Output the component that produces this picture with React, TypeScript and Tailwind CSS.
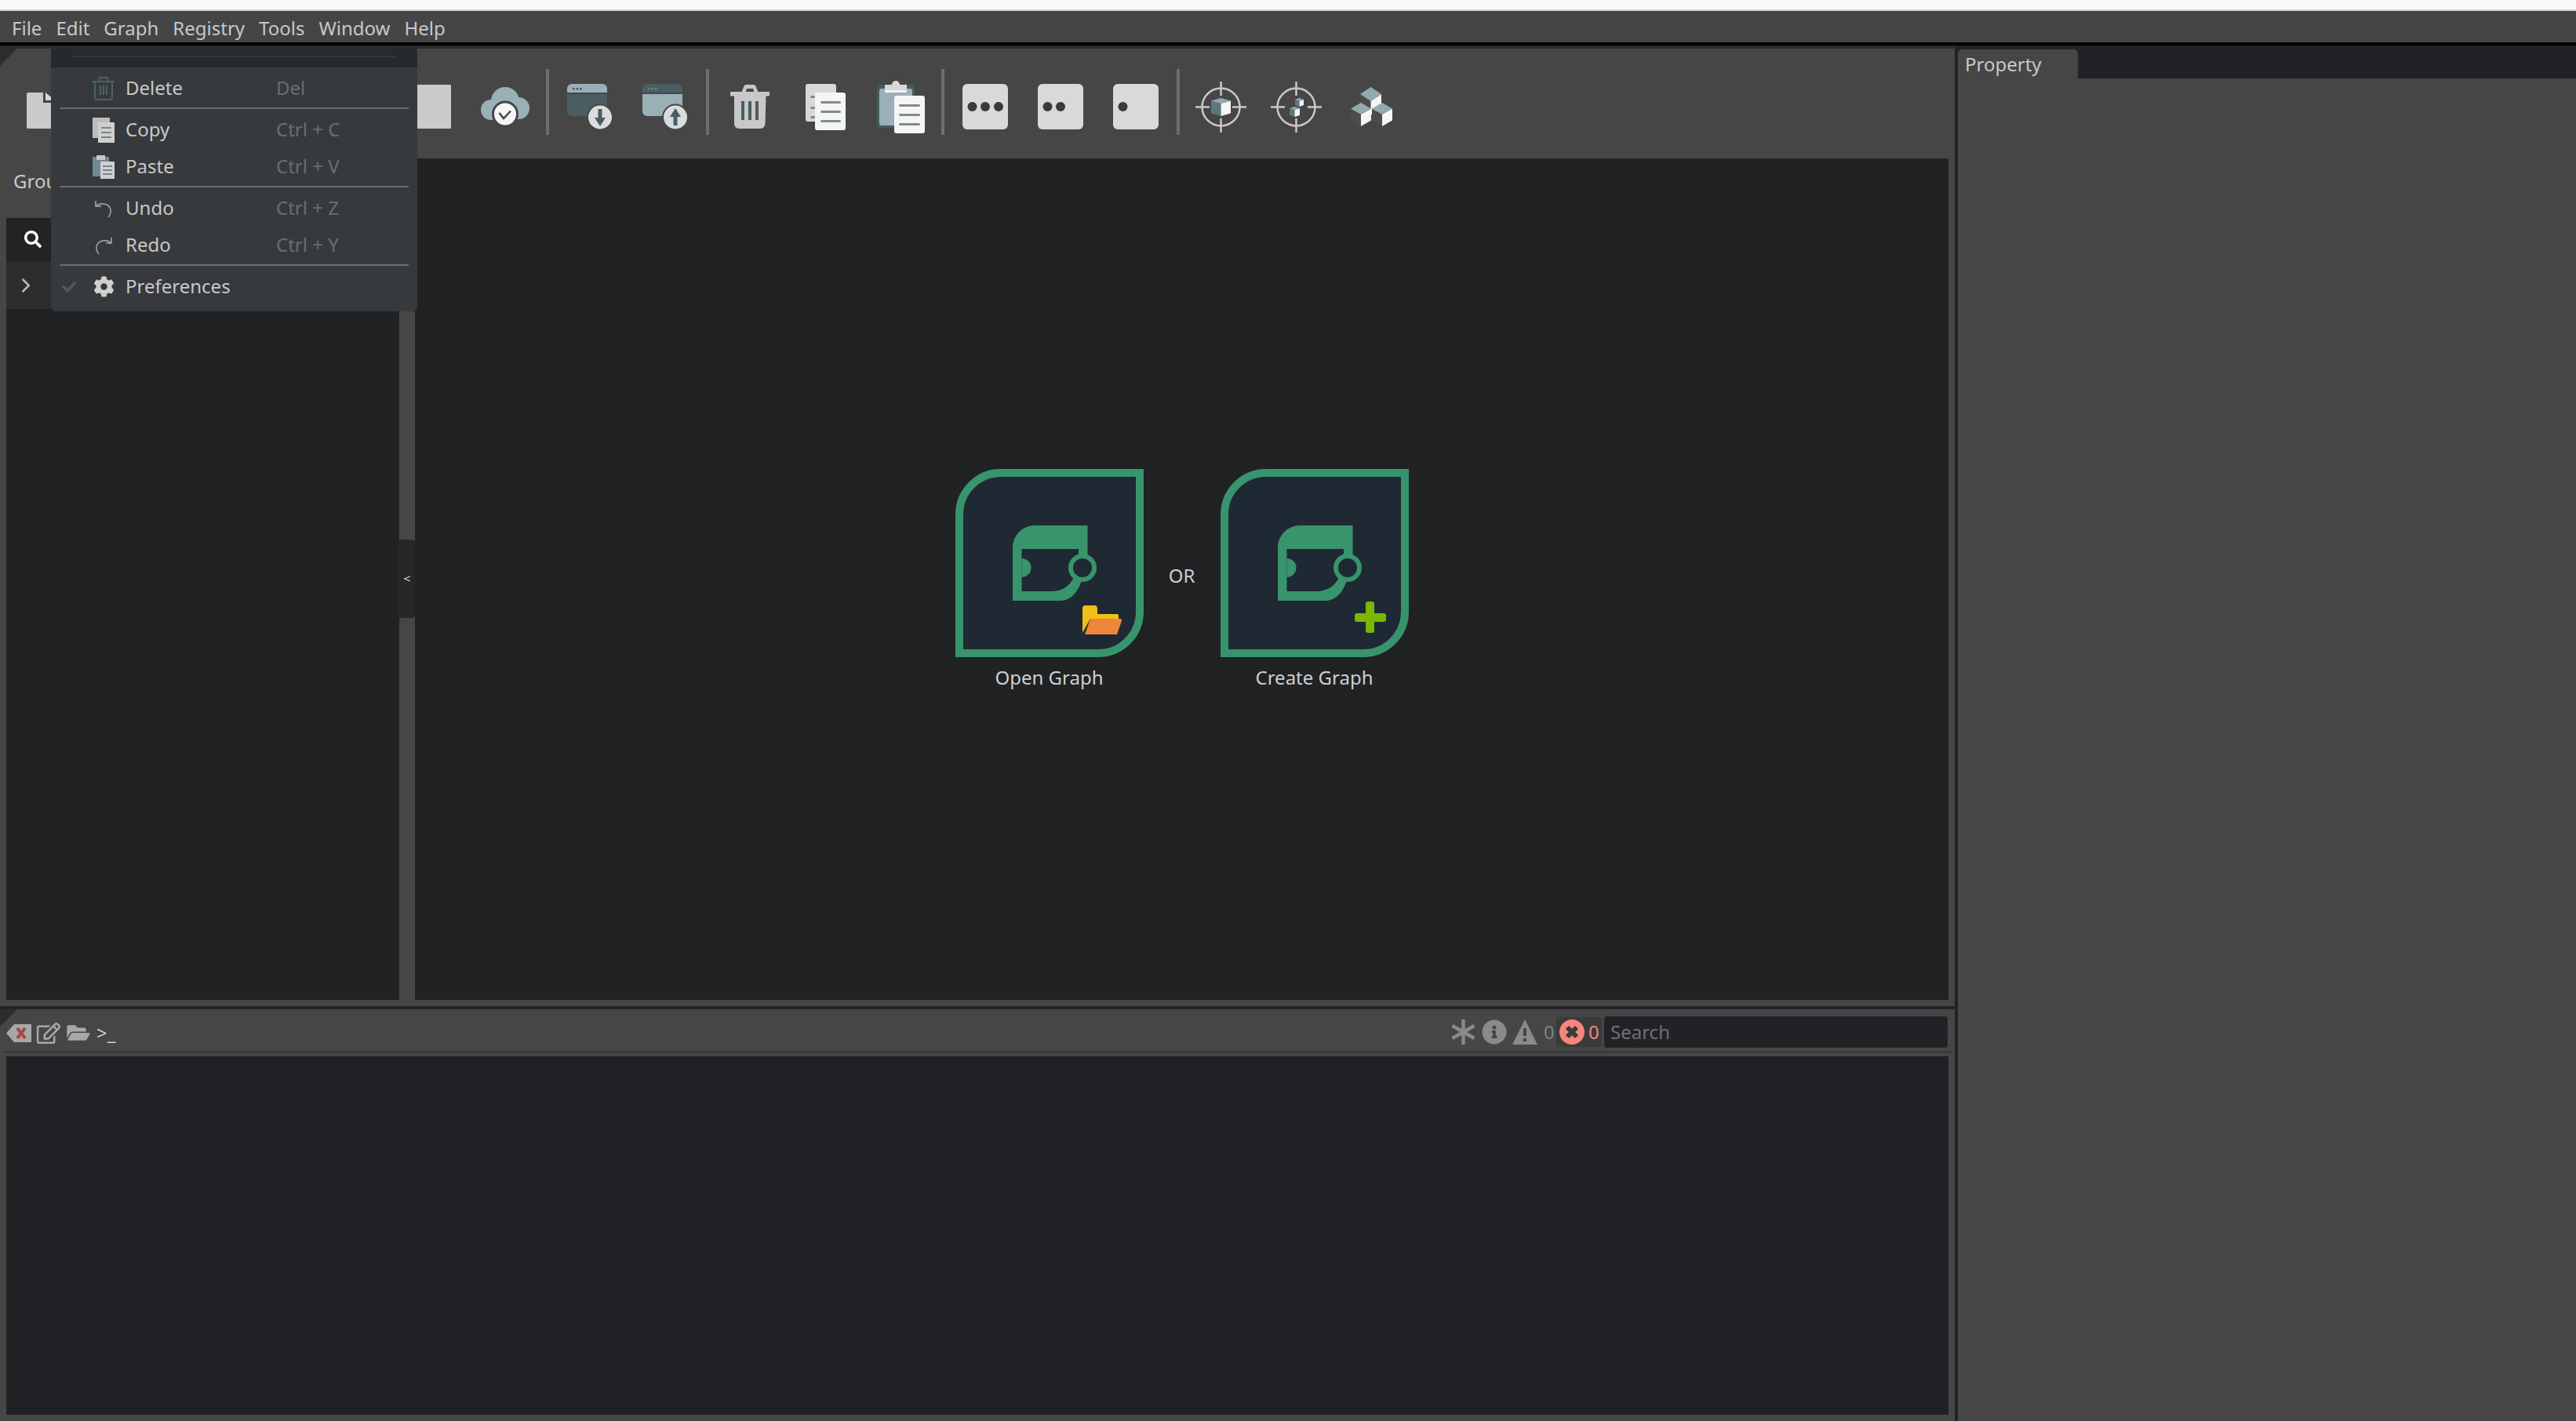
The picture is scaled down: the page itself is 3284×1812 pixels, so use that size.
import { ChevronRight } from "lucide-react";
import { FaCheck, FaCog, FaFolderOpen, FaInfoCircle, FaRegEdit, FaSearch } from "react-icons/fa";

const MENUS = ["File", "Edit", "Graph", "Registry", "Tools", "Window", "Help"];

function Corner() {
  return (
    <svg width="22" height="22" viewBox="0 0 22 22" className="absolute left-0 top-0">
      <path d="M0 0H22L0 22Z" fill="#2d2d2d" />
    </svg>
  );
}

function ToolButton({ children }: { children?: React.ReactNode }) {
  return <div className="flex h-full w-[96px] items-center justify-center pt-[8px]">{children}</div>;
}

function ToolSep() {
  return <div className="mx-[4px] mt-[26px] h-[84px] w-[4px] bg-[#6e6e6e]" />;
}

function FileIcon() {
  return (
    <svg width="52" height="56" viewBox="0 0 52 56">
      <path d="M0 12a2 2 0 0 1 2-2H21V23H52V54a2 2 0 0 1-2 2H2a2 2 0 0 1-2-2Z" fill="#cacaca" />
      <path d="M24 10L36 20H24Z" fill="#d8d8d8" />
    </svg>
  );
}

function SaveIcon() {
  return <svg width="54" height="56" viewBox="0 0 54 56"><path d="M0 0H54V56H0Z" fill="#cacaca" /></svg>;
}

function CloudIcon() {
  return (
    <svg width="62" height="50" viewBox="0 0 62 50">
      <g fill="#9ab0b7">
        <circle cx="31" cy="18" r="18" />
        <circle cx="13" cy="29" r="13" />
        <circle cx="48" cy="27" r="14" />
        <rect x="13" y="20" width="35" height="21" />
      </g>
      <circle cx="31" cy="34.500" r="15.500" fill="#f5f5f5" stroke="#464646" strokeWidth="3" />
      <path d="M23.500 33l5.500 7 9-9.500" fill="none" stroke="#464646" strokeWidth="2.500" />
    </svg>
  );
}

function WindowIcon({ up }: { up?: boolean }) {
  const bar = up ? "#4a5d62" : "#9ab0b7";
  const body = up ? "#9ab0b7" : "#4a5d62";
  return (
    <svg width="58" height="59" viewBox="0 0 58 59">
      <path d="M0 6a6 6 0 0 1 6-6h39a6 6 0 0 1 6 6v5H0Z" fill={bar} />
      <path d="M0 13H51V35a6 6 0 0 1-6 6H6a6 6 0 0 1-6-6Z" fill={body} />
      <g fill={up ? "#6d8289" : "#46565b"}>
        <rect x="7" y="5" width="2.500" height="2.500" />
        <rect x="11.500" y="5" width="2.500" height="2.500" />
        <rect x="16" y="5" width="2.500" height="2.500" />
      </g>
      <circle cx="42" cy="42.500" r="16" fill={up ? "#d8dcdd" : "#dcdcdc"} stroke="#464646" strokeWidth="2" />
      {up ? (
        <path d="M42 31l7 11h-4.500v11h-5V42H35Z" fill="#4a5d62" />
      ) : (
        <path d="M39.500 32h5v11H49l-7 11-7-11h4.500Z" fill="#4a5d62" />
      )}
    </svg>
  );
}

function TrashIcon() {
  return (
    <svg width="50" height="56" viewBox="0 0 50 56">
      <path d="M14 11l3-8a4 4 0 0 1 3-3h10a4 4 0 0 1 3 3l3 8h-5l-2-6H21l-2 6Z" fill="#c8c8c8" />
      <rect x="0" y="9" width="50" height="5.500" rx="1" fill="#c8c8c8" />
      <path d="M5 14H45.500L44.500 50a6 6 0 0 1-6 6H11a6 6 0 0 1-6-6Z" fill="#c8c8c8" />
      <g fill="#4a5d62">
        <rect x="14" y="21" width="4" height="24" />
        <rect x="23" y="21" width="4" height="24" />
        <rect x="32" y="21" width="4" height="24" />
      </g>
    </svg>
  );
}

function CopyIcon() {
  return (
    <svg width="51" height="59" viewBox="0 0 51 59">
      <rect width="39" height="48" rx="3" fill="#d8d8d8" />
      <g fill="#7c8d8f">
        <rect x="6" y="15" width="7" height="3" rx="1.500" />
        <rect x="6" y="29" width="7" height="3" rx="1.500" />
        <rect x="6" y="41" width="7" height="3" rx="1.500" />
      </g>
      <rect x="12" y="11" width="39" height="48" rx="3" fill="#f5f5f5" />
      <g fill="#7c8d8f">
        <rect x="19" y="22" width="26" height="3" rx="1.500" />
        <rect x="19" y="34" width="26" height="3" rx="1.500" />
        <rect x="19" y="46" width="26" height="3" rx="1.500" />
      </g>
    </svg>
  );
}

function PasteIcon() {
  return (
    <svg width="61" height="67" viewBox="0 0 61 67">
      <rect y="5" width="48" height="55" fill="#455a60" />
      <rect x="3" y="10" width="42" height="47" rx="3" fill="#9ab0b7" />
      <path d="M10 5h9a5 5 0 0 1 10 0h9v10H10Z" fill="#d8d8d8" />
      <rect x="10" y="12" width="28" height="3" fill="#f2f2f2" />
      <rect x="22" y="19" width="39" height="48" rx="3" fill="#f5f5f5" />
      <g fill="#7c8d8f">
        <rect x="28" y="30" width="27" height="3" rx="1.500" />
        <rect x="28" y="42" width="27" height="3" rx="1.500" />
        <rect x="28" y="54" width="27" height="3" rx="1.500" />
      </g>
    </svg>
  );
}

function DotsCard({ count }: { count: number }) {
  return (
    <svg width="58" height="58" viewBox="0 0 58 58">
      <rect width="58" height="58" rx="6" fill="#d9d9d9" />
      {[12.5, 29, 46].slice(0, count).map((x) => (
        <circle key={x} cx={x} cy="29" r="6" fill="#3a3a3a" />
      ))}
    </svg>
  );
}

function Cube({ x, y, w, h, d, side = "#5c7780" }: { x: number; y: number; w: number; h: number; d: number; side?: string }) {
  return (
    <g>
      <path d={`M${x} ${y + d / 2}L${x + w / 2} ${y + d}V${y + h}L${x} ${y + h - d / 2}Z`} fill={side} />
      <path d={`M${x + w} ${y + d / 2}L${x + w / 2} ${y + d}V${y + h}L${x + w} ${y + h - d / 2}Z`} fill="#f5f5f5" />
      <path d={`M${x} ${y + d / 2}L${x + w / 2} ${y}L${x + w} ${y + d / 2}L${x + w / 2} ${y + d}Z`} fill="#93a9b0" />
    </g>
  );
}

function TargetIcon({ children }: { children: React.ReactNode }) {
  return (
    <svg width="65" height="65" viewBox="0 0 65 65">
      <circle cx="32.500" cy="32.500" r="24" fill="none" stroke="#c8c8c8" strokeWidth="2.500" />
      <path d="M32.500 0V18M32.500 47V65M0 32.500H18M47 32.500H65" stroke="#c8c8c8" strokeWidth="2.500" />
      {children}
    </svg>
  );
}

function CubesIcon() {
  return (
    <svg width="54" height="50" viewBox="0 0 54 50">
      <Cube x={13} y={0} w={27} h={36} d={18} side="#4c4c4c" />
      <Cube x={1} y={20} w={26} h={30} d={15} side="#4c4c4c" />
      <Cube x={28} y={20} w={26} h={30} d={15} side="#4c4c4c" />
    </svg>
  );
}

function Toolbar() {
  return (
    <div className="relative flex h-[140px] shrink-0 bg-[#464646] pl-[12px]">
      <Corner />
      <ToolButton><FileIcon /></ToolButton>
      <ToolButton />
      <ToolButton />
      <ToolButton />
      <div className="w-[104px]" />
      <ToolButton><SaveIcon /></ToolButton>
      <ToolButton><CloudIcon /></ToolButton>
      <ToolSep />
      <ToolButton><WindowIcon /></ToolButton>
      <ToolButton><WindowIcon up /></ToolButton>
      <ToolSep />
      <ToolButton><TrashIcon /></ToolButton>
      <ToolButton><CopyIcon /></ToolButton>
      <ToolButton><PasteIcon /></ToolButton>
      <ToolSep />
      <ToolButton><DotsCard count={3} /></ToolButton>
      <ToolButton><DotsCard count={2} /></ToolButton>
      <ToolButton><DotsCard count={1} /></ToolButton>
      <ToolSep />
      <ToolButton><TargetIcon><Cube x={20} y={21} w={25} h={23} d={7} /></TargetIcon></ToolButton>
      <ToolButton>
        <TargetIcon>
          <Cube x={31} y={21} w={11} h={11} d={4} />
          <Cube x={24} y={32} w={13} h={13} d={4} />
        </TargetIcon>
      </ToolButton>
      <ToolButton><CubesIcon /></ToolButton>
    </div>
  );
}

function GraphCard({ children }: { children: React.ReactNode }) {
  return (
    <svg width="240" height="240" viewBox="0 0 240 240">
      <path d="M5 235V58A53 53 0 0 1 58 5H235V182A53 53 0 0 1 182 235Z" fill="#1f2933" stroke="#38946c" strokeWidth="10" />
      <path
        fillRule="evenodd"
        d="M73 168V100A28 28 0 0 1 101 72H168.500V112L160 145C155 158 147 168 133 168ZM84.500 102V156H122C136 156 146 150 152 136L157 112V102Z"
        fill="#38946c"
      />
      <path d="M84.500 114A12 12 0 0 1 84.500 138Z" fill="#38946c" />
      <circle cx="162" cy="126" r="15" fill="#1f2933" stroke="#38946c" strokeWidth="6" />
      {children}
    </svg>
  );
}

function StartPanel() {
  return (
    <div className="flex items-center justify-center">
      <div className="flex flex-col items-center">
        <GraphCard>
          <path d="M162 178a4 4 0 0 1 4-4h11a4 4 0 0 1 4 4v7h25a2 2 0 0 1 2 2v4H172l-10 18Z" fill="#f0c018" />
          <path d="M172 191H210a2 2 0 0 1 2 2.500L206 211H165Z" fill="#ef853c" />
        </GraphCard>
        <span className="mt-[10px] text-[24px] leading-[32px] text-[#cfcfcf]">Open Graph</span>
      </div>
      <div className="w-[98px] pb-[10px] text-center text-[24px] leading-[32px] text-[#cfcfcf]">OR</div>
      <div className="flex flex-col items-center">
        <GraphCard>
          <rect x="185" y="169" width="11" height="40" rx="3" fill="#7ab800" />
          <rect x="171" y="184" width="40" height="11" rx="3" fill="#7ab800" />
        </GraphCard>
        <span className="mt-[10px] text-[24px] leading-[32px] text-[#cfcfcf]">Create Graph</span>
      </div>
    </div>
  );
}

function ClearIcon() {
  return (
    <svg width="32" height="23" viewBox="0 0 32 23">
      <path d="M0 11.500L10 0H32V23H10Z" fill="#a8a8a8" />
      <path d="M14 5l10 13M24 5L14 18" stroke="#a8484c" strokeWidth="4" />
    </svg>
  );
}

function StatusIcons() {
  return (
    <div className="flex items-center">
      <svg width="31" height="32" viewBox="0 0 31 32" className="ml-[9px]">
        <path d="M15.500 0V32M1.500 8L29.500 24M29.500 8L1.500 24" stroke="#8a8a8a" strokeWidth="4.500" />
      </svg>
      <FaInfoCircle className="ml-[8px] h-[32px] w-[32px] text-[#8a8a8a]" />
      <svg width="32" height="32" viewBox="0 0 32 32" className="ml-[7px]">
        <path fillRule="evenodd" d="M16 0L32 32H0ZM14 11V21H18V11ZM14 24V28H18V24Z" fill="#8a8a8a" />
      </svg>
      <span className="ml-[8px] w-[16px] text-[24px] leading-[32px] text-[#808080]">0</span>
      <div className="flex h-[38px] w-[58px] items-center bg-[#3a3a3a] pl-[4px]">
        <svg width="32" height="32" viewBox="0 0 32 32">
          <circle cx="16" cy="16" r="16" fill="#f5877a" />
          <path d="M10 10L22 22M22 10L10 22" stroke="#3a3a3a" strokeWidth="6" />
        </svg>
        <span className="ml-[5px] text-[24px] leading-[32px] text-[#f0867a]">0</span>
      </div>
    </div>
  );
}

function ConsoleBar() {
  return (
    <div className="relative flex h-[54px] shrink-0 items-center">
      <Corner />
      <div className="ml-[8px] mt-[6px] flex items-center">
        <ClearIcon />
        <FaRegEdit className="ml-[6px] h-[27px] w-[32px] text-[#a8a8a8]" />
        <FaFolderOpen className="ml-[6px] h-[26px] w-[32px] text-[#a8a8a8]" />
        <span className="ml-[7px] text-[24px] leading-[30px] text-[#cfcfcf]">&gt;_</span>
      </div>
      <div className="ml-auto mr-[9px] mt-[4px] flex items-center">
        <StatusIcons />
        <div className="ml-[3px] flex h-[40px] w-[438px] items-center rounded-[4px] bg-[#212226] pl-[8px] text-[24px] text-[#707070]">
          Search
        </div>
      </div>
    </div>
  );
}

function MenuRow({ icon, label, keys, check }: { icon: React.ReactNode; label: string; keys?: string; check?: boolean }) {
  return (
    <div className="flex h-[47px] items-center text-[24px]">
      <div className="flex w-[53px] justify-end pr-[20px]">
        {check && <FaCheck className="h-[18px] w-[20px] text-[#55585a]" />}
      </div>
      <div className="flex w-[28px] justify-center">{icon}</div>
      <span className="mb-[2px] ml-[14px] w-[192px] text-[#c8c8c8]">{label}</span>
      {keys && <span className="mb-[2px] text-[#6a6d6e]">{keys}</span>}
    </div>
  );
}

function MenuSep() {
  return <div className="mx-[11px] mb-[3px] mt-px h-[2px] bg-[#6b6e6f]" />;
}

function EditMenu() {
  return (
    <div className="absolute left-[65px] top-[59px] h-[338px] w-[467px] overflow-hidden rounded-[6px] bg-[#373a3d]">
      <div className="flex h-[27px] items-center bg-[#272a2c] px-[27px] pb-[2px]">
        <div className="h-[2px] w-full bg-[#33373a]" />
      </div>
      <div className="pt-[3px]">
        <MenuRow
          label="Delete"
          keys="Del"
          icon={
            <svg width="28" height="30" viewBox="0 0 28 30" fill="none" stroke="#4c6266" strokeWidth="2">
              <path d="M0 6H28M8 6l1-5h10l1 5M3 6V26a3 3 0 0 0 3 3H22a3 3 0 0 0 3-3V6M10 11V23M14 11V23M18 11V23" />
            </svg>
          }
        />
        <MenuSep />
        <MenuRow
          label="Copy"
          keys="Ctrl + C"
          icon={
            <svg width="28" height="32" viewBox="0 0 28 32">
              <rect width="22" height="26" fill="#bdbdbd" />
              <rect x="7" y="6" width="21" height="26" fill="#d0d0d0" />
              <path d="M11 13H24M11 19H24M11 25H24" stroke="#5a6c70" strokeWidth="1.500" />
            </svg>
          }
        />
        <MenuRow
          label="Paste"
          keys="Ctrl + V"
          icon={
            <svg width="28" height="30" viewBox="0 0 28 30">
              <rect y="2" width="21" height="25" fill="#708890" />
              <rect x="5" y="0" width="11" height="6" fill="#c8c8c8" />
              <rect x="10" y="8" width="18" height="22" fill="#d0d0d0" />
              <path d="M13 14H25M13 19H25M13 24H25" stroke="#5a6c70" strokeWidth="1.500" />
            </svg>
          }
        />
        <MenuSep />
        <MenuRow
          label="Undo"
          keys="Ctrl + Z"
          icon={
            <svg width="22" height="22" viewBox="0 0 22 22" fill="none" stroke="#a8a8a8" strokeWidth="1.500">
              <path d="M1 1V8H8M1 8C8 2 19 5 20 13C20.500 17 19 20 17 22" />
            </svg>
          }
        />
        <MenuRow
          label="Redo"
          keys="Ctrl + Y"
          icon={
            <svg width="22" height="22" viewBox="0 0 22 22" fill="none" stroke="#a8a8a8" strokeWidth="1.500">
              <path d="M21 1V8H14M21 8C14 2 3 5 2 13C1.500 17 3 20 5 22" />
            </svg>
          }
        />
        <MenuSep />
        <MenuRow label="Preferences" check icon={<FaCog className="h-[27px] w-[27px] text-[#d0d0d0]" />} />
      </div>
    </div>
  );
}

export default function App() {
  return (
    <div className="relative flex h-[1812px] w-[3284px] flex-col overflow-hidden bg-[#464646] font-['Noto_Sans',sans-serif]">
      <div className="h-[14px] shrink-0 border-b-2 border-[#cfcfcf] bg-[#fafafa]" />
      <div className="flex h-[40px] shrink-0 items-center gap-[18px] bg-[#454545] pl-[15px] pt-[3px] text-[24px] text-[#c8c8c8]">
        {MENUS.map((m) => (
          <span key={m}>{m}</span>
        ))}
      </div>
      <div className="h-[4px] shrink-0 bg-black" />
      <div className="flex min-h-0 flex-1">
        <div className="flex w-[2492px] flex-col">
          <div className="h-[4px] shrink-0 bg-[#2a2a2a]" />
          <Toolbar />
          <div className="relative flex h-[1081px] shrink-0 pb-[8px] pl-[8px]">
            <div className="flex w-[501px] flex-col">
              <div className="flex h-[76px] items-center pb-[18px] pl-[9px] text-[24px] text-[#c8c8c8]">Groups</div>
              <div className="flex h-[56px] items-center bg-[#212325] pb-[2px] pl-[23px]">
                <FaSearch className="h-[22px] w-[22px] text-white" />
              </div>
              <div className="flex h-[60px] items-center bg-[#2d2d2d] pl-[10px]">
                <ChevronRight className="h-[30px] w-[30px] text-[#b8b8b8]" strokeWidth={2} />
              </div>
              <div className="flex-1 bg-[#202224]" />
            </div>
            <div className="relative w-[20px]">
              <div className="absolute left-[-1px] top-[486px] flex h-[100px] w-[21px] items-center justify-center rounded-[4px] bg-[#272727]">
                <svg width="8" height="8" viewBox="0 0 8 8" fill="none" stroke="#c8c8c8" strokeWidth="1.200">
                  <path d="M8 1L0.500 4L8 7" />
                </svg>
              </div>
            </div>
            <div className="flex w-[1955px] items-center justify-center bg-[#202224]">
              <StartPanel />
            </div>
          </div>
          <div className="h-[4px] shrink-0 bg-[#23232a]" />
          <ConsoleBar />
          <div className="ml-[4px] mr-[4px] h-px shrink-0 bg-[#2a2a2a]" />
          <div className="flex-1 px-[8px] pb-[8px] pt-[5px]">
            <div className="h-full bg-[#202124]" />
          </div>
        </div>
        <div className="w-[4px] bg-[#212226]" />
        <div className="flex flex-1 flex-col">
          <div className="flex h-[42px] items-end bg-[#212226]">
            <div className="flex h-[37px] w-[153px] items-center rounded-t-[5px] bg-[#464646] pl-[9px] text-[24px] text-[#c8c8c8]">
              Property
            </div>
          </div>
          <div className="flex-1 bg-[#464646]" />
        </div>
      </div>
      <EditMenu />
    </div>
  );
}
